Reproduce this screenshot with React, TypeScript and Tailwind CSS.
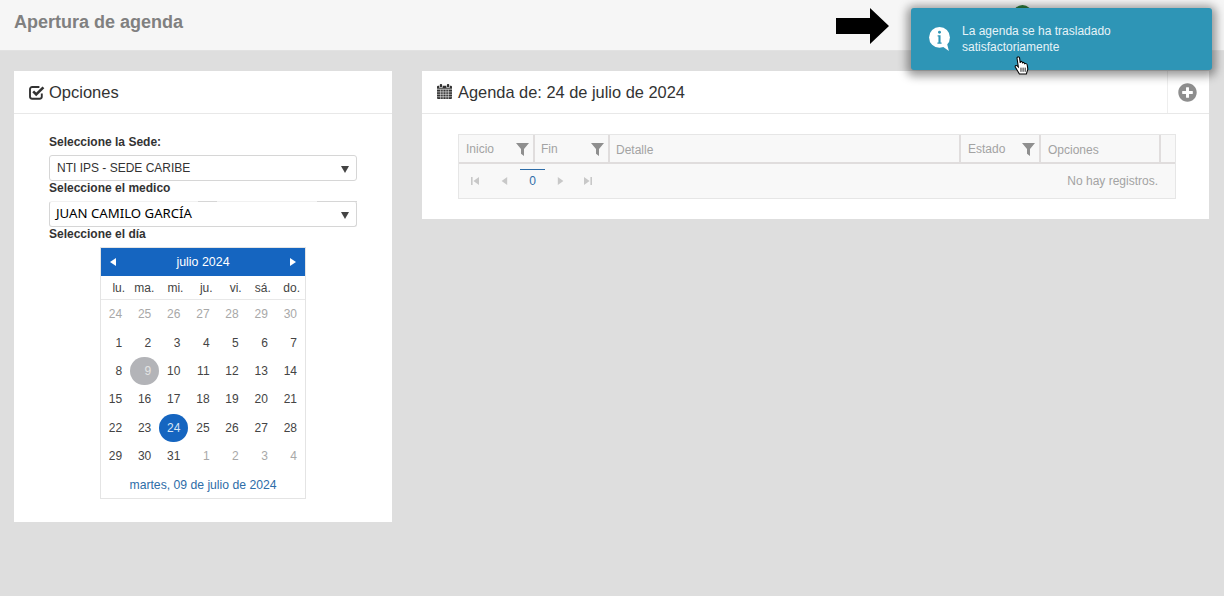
import { FaPlusCircle } from "react-icons/fa";

const weekDays = ["lu.", "ma.", "mi.", "ju.", "vi.", "sá.", "do."];

const days = [
  ["24", "25", "26", "27", "28", "29", "30"],
  ["1", "2", "3", "4", "5", "6", "7"],
  ["8", "9", "10", "11", "12", "13", "14"],
  ["15", "16", "17", "18", "19", "20", "21"],
  ["22", "23", "24", "25", "26", "27", "28"],
  ["29", "30", "31", "1", "2", "3", "4"],
];

const CheckIcon = () => (
  <svg viewBox="0 0 16 15" className="w-[16px] h-[15px]" fill="none" stroke="#333">
    <path d="M12.8 8.6V11.6A2.2 2.2 0 0 1 10.6 13.8H3.2A2.2 2.2 0 0 1 1 11.6V4.2A2.2 2.2 0 0 1 3.2 2H10.4" strokeWidth="1.9" />
    <path d="M4.2 6.4L7.2 9.4L14.4 2.4" strokeWidth="2.6" />
  </svg>
);

const CalendarIcon = () => (
  <svg viewBox="0 0 16 16" className="w-[15px] h-[15px] text-[#333]" fill="currentColor">
    <rect x="3" y="0" width="2.4" height="3.4" rx="0.8" />
    <rect x="10.6" y="0" width="2.4" height="3.4" rx="0.8" />
    <path d="M1.2 1.8H2.4V4H6V1.8H10V4H13.6V1.8H14.8A1.2 1.2 0 0 1 16 3V5H0V3A1.2 1.2 0 0 1 1.2 1.8Z" />
    <path d="M0 5.8H16V14.8A1.2 1.2 0 0 1 14.8 16H1.2A1.2 1.2 0 0 1 0 14.8Z" />
    <path
      d="M3.9 5.8V16M6.5 5.8V16M9.5 5.8V16M12.1 5.8V16M0 8.4H16M0 11H16M0 13.6H16"
      stroke="#fff"
      strokeWidth="0.6"
    />
  </svg>
);

const FunnelIcon = () => (
  <svg viewBox="0 0 13 13" className="w-[13px] h-[13px] mt-[8px] shrink-0" fill="#8f8f8f">
    <path d="M0 0H13L8 6V13L5 10.8V6Z" />
  </svg>
);

const SelectBox = ({ text, juan }: { text: string; juan?: boolean }) => (
  <div
    className={`relative flex items-center justify-between h-[26px] w-[308px] border border-[#d6d6d6] rounded-[3px] bg-white pl-[6px] pr-[7px] ${
      juan ? "border-t-[#f1f1f1]" : ""
    }`}
  >
    {juan ? (
      <>
        <span className="absolute -top-px left-[148px] w-[19px] h-px bg-[#d6d6d6]"></span>
        <span className="absolute -top-px left-[267px] w-[40px] h-px bg-[#d6d6d6]"></span>
        <span className="text-[13.2px] text-black font-['Noto_Sans',sans-serif]">{text}</span>
      </>
    ) : (
      <span className="text-[12px] text-[#333] ml-[1px]">{text}</span>
    )}
    <span className="w-0 h-0 border-x-[4.5px] border-x-transparent border-t-[7px] border-t-[#444] mt-[2px]"></span>
  </div>
);

const Label = ({ children }: { children: string }) => (
  <div className="text-[12px] font-bold text-[#333] h-[20px] leading-[14px]">{children}</div>
);

const HeadCell = ({ label, width, filter, pad = "pl-[7px]" }: { label: string; width: string; filter?: boolean; pad?: string }) => (
  <div className={`${width} ${pad} flex justify-between border-r-2 border-[#e0dddd] pr-[4px]`}>
    <span className={`text-[12px] text-[#a3a3a3] ${filter ? "pt-[5px]" : "pt-[6px]"}`}>{label}</span>
    {filter && <FunnelIcon />}
  </div>
);

const Calendar = () => (
  <div className="w-[206px] h-[252px] border border-[#e4e4e4] mx-auto">
    <div className="h-[28px] bg-[#1565c0] flex items-center justify-between px-[9px] text-white text-[12.4px]">
      <span className="w-0 h-0 border-y-[4px] border-y-transparent border-r-[6px] border-r-white"></span>
      <span>julio 2024</span>
      <span className="w-0 h-0 border-y-[4px] border-y-transparent border-l-[6px] border-l-white"></span>
    </div>
    <div className="grid grid-cols-7 h-[24px] border-b border-[#e8e8e8] items-center">
      {weekDays.map((d) => (
        <div key={d} className="text-right pr-[5px] text-[12px] text-[#444]">
          {d}
        </div>
      ))}
    </div>
    <div className="grid grid-cols-7 auto-rows-[28.4px]">
      {days.map((row, r) =>
        row.map((d, c) => {
          const other = r === 0 || (r === 5 && c > 2);
          const grey = r === 2 && c === 1;
          const blue = r === 4 && c === 2;
          return (
            <div
              key={`${r}-${c}`}
              className={`flex items-center justify-end pr-[8px] text-[12px] rounded-full ${
                grey ? "bg-[#b3b4b8] text-[#e4e4e4]" : blue ? "bg-[#1565c0] text-[#d8e6f6]" : other ? "text-[#a8a8a8]" : "text-[#444]"
              }`}
            >
              {d}
            </div>
          );
        })
      )}
    </div>
    <div className="h-[29px] flex items-center justify-center text-[12.2px] text-[#2e6da8]">martes, 09 de julio de 2024</div>
  </div>
);

const AgendaTable = () => (
  <div className="border border-[#e6e6e6] bg-[#f8f8f8] h-[65px]">
    <div className="flex h-[29px] border-b-2 border-[#e0dddd] pl-[1px]">
      <HeadCell label="Inicio" width="w-[75px]" pad="pl-[6px]" filter />
      <HeadCell label="Fin" width="w-[75px]" pad="pl-[6px]" filter />
      <HeadCell label="Detalle" width="w-[351px]" pad="pl-[6px]" />
      <HeadCell label="Estado" width="w-[80px]" filter />
      <HeadCell label="Opciones" width="w-[120px]" />
    </div>
    <div className="flex items-center justify-between h-[34px] pr-[17px] pl-[12px]">
      <div className="flex items-center text-[#c8c8c8]">
        <svg viewBox="0 0 10 10" className="w-[8px] h-[8px]" fill="currentColor">
          <rect x="0" y="0" width="2" height="10" />
          <path d="M10 0V10L3 5Z" />
        </svg>
        <svg viewBox="0 0 10 10" className="w-[8px] h-[8px] ml-[21px]" fill="currentColor">
          <path d="M9 0V10L2 5Z" />
        </svg>
        <div className="relative w-[25px] ml-[12px] text-center text-[12px] text-[#2e6da8]">
          <span className="absolute -top-[3px] left-0 w-[25px] h-px bg-[#2e6da8]"></span>
          0
        </div>
        <svg viewBox="0 0 10 10" className="w-[8px] h-[8px] ml-[12px]" fill="currentColor">
          <path d="M1 0V10L8 5Z" />
        </svg>
        <svg viewBox="0 0 10 10" className="w-[8px] h-[8px] ml-[19px]" fill="currentColor">
          <path d="M0 0V10L7 5Z" />
          <rect x="8" y="0" width="2" height="10" />
        </svg>
      </div>
      <span className="text-[12px] text-[#a3a3a3]">No hay registros.</span>
    </div>
  </div>
);

export default function App() {
  return (
    <div className="relative h-[596px] w-[1224px] overflow-hidden bg-[#dedede] font-['Liberation_Sans',Arial,sans-serif]">
      {/* barra superior */}
      <header className="h-[51px] bg-[#f6f6f6] border-b border-[#e2e2e2] flex items-center px-[14px] pb-[5px]">
        <h1 className="text-[18px] font-bold text-[#808080]">Apertura de agenda</h1>
      </header>

      <main className="flex items-start pt-[20px] pl-[14px]">
        {/* Opciones */}
        <section className="w-[378px] h-[451px] bg-white">
          <div className="h-[43px] border-b border-[#e8e8e8] flex items-center gap-[4px] pl-[15px]">
            <CheckIcon />
            <span className="text-[16.5px] text-[#333]">Opciones</span>
          </div>
          <div className="pt-[21px] pl-[35px]">
            <Label>Seleccione la Sede:</Label>
            <SelectBox text="NTI IPS - SEDE CARIBE" />
            <Label>Seleccione el medico</Label>
            <SelectBox text="JUAN CAMILO GARCÍA" juan />
            <Label>Seleccione el día</Label>
            <div className="-ml-[35px]">
              <div className="w-[206px] ml-[86px]">
                <Calendar />
              </div>
            </div>
          </div>
        </section>

        {/* Agenda */}
        <section className="w-[787px] h-[148px] bg-white ml-[30px]">
          <div className="h-[43px] border-b border-[#e8e8e8] flex items-center justify-between pl-[15px]">
            <div className="flex items-center gap-[6px]">
              <CalendarIcon />
              <span className="text-[16.4px] text-[#333]">Agenda de: 24 de julio de 2024</span>
            </div>
            <div className="w-[42px] h-full border-l border-[#eeeeee] flex items-center justify-center pr-[2px]">
              <FaPlusCircle className="text-[#8e8e8e] text-[19px]" />
            </div>
          </div>
          <div className="pt-[20px] pl-[36px] pr-[33px]">
            <AgendaTable />
          </div>
        </section>
      </main>

      {/* lo que asoma detrás del aviso */}
      <div className="absolute left-[1013px] top-[5px] w-[19px] h-[10px] rounded-t-full bg-[#2f7d3d]"></div>

      {/* flecha */}
      <svg viewBox="0 0 53 36" className="absolute left-[836px] top-[8px] w-[53px] h-[36px]" fill="#000">
        <path d="M0 10H34V0L53 18L34 36V26H0Z" />
      </svg>

      {/* aviso */}
      <div className="absolute left-[911px] top-[8px] w-[301px] h-[62px] rounded-[3px] bg-[#2e95b6] shadow-[0_2px_10px_4px_rgba(0,0,0,0.4)] flex items-center pl-[18px]">
        <svg viewBox="0 0 20 23" className="w-[21px] h-[24px] shrink-0">
          <circle cx="10" cy="10" r="10" fill="#fff" />
          <path d="M12 18L19 23L17 15Z" fill="#fff" />
          <circle cx="10" cy="5" r="1.4" fill="#2e95b6" />
          <path d="M8.2 8H11V14.8H12V16H8V14.8H9V9.2H8.2Z" fill="#2e95b6" />
        </svg>
        <p className="ml-[12px] text-[12px] leading-[16px] text-[#e6f3f8] w-[200px]">La agenda se ha trasladado satisfactoriamente</p>
      </div>

      {/* cursor */}
      <svg viewBox="0 0 14 18" className="absolute left-[1014px] top-[56px] w-[15px] h-[19px]">
        <path
          d="M3 1.2C3.8 0.4 5 0.8 5.2 2L5.8 6.5L6 5.5C6.6 4.8 7.6 5 7.8 6L8 6.4C8.6 5.8 9.6 6 9.8 7L10 7.4C10.8 6.8 12.2 7.2 12.4 8.4L13 12.5L11.6 17H5L1.2 10.6C0.6 9.4 1.6 8.4 3 9.4L4 10.4L2.8 2.4C2.7 2 2.8 1.5 3 1.2Z"
          fill="#fff"
          stroke="#000"
          strokeWidth="1"
        />
        <path d="M6.5 11V15M8.5 11V15M10.5 11V15" stroke="#000" strokeWidth="0.8" />
      </svg>
    </div>
  );
}
